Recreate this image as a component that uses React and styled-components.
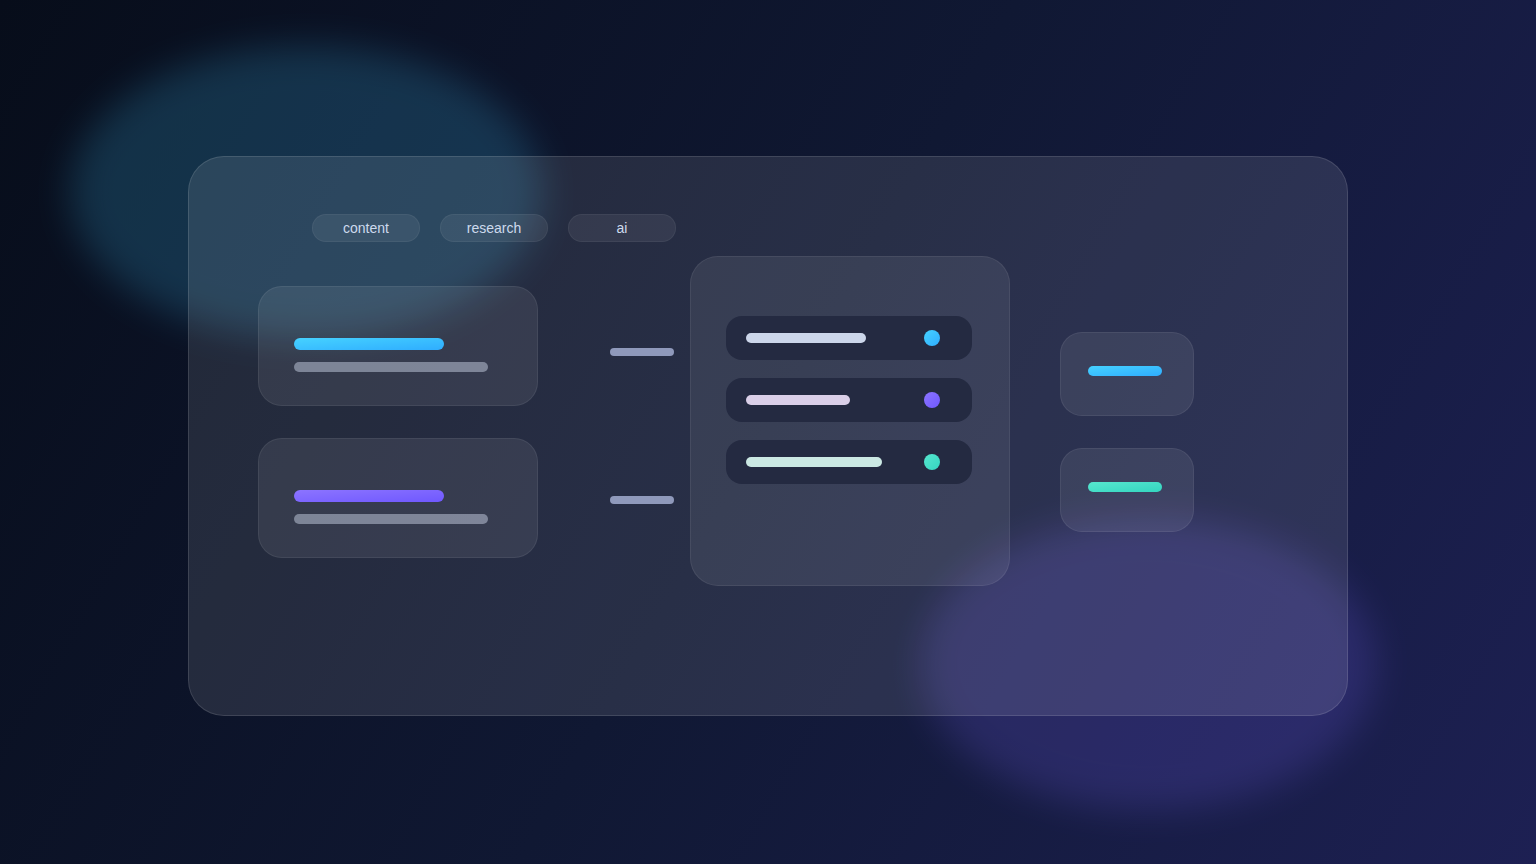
import React from "react";
import styled, { createGlobalStyle } from "styled-components";

const GlobalStyle = createGlobalStyle`
  *, *::before, *::after { box-sizing: border-box; }
  body {
    margin: 0;
    background: #0b1226;
    font-family: "Liberation Sans", Arial, sans-serif;
  }
`;

const fills = {
  sky: "linear-gradient(to bottom right, #46d2ff, #2fadff)",
  violet: "linear-gradient(to bottom right, #8c74ff, #6f58ff)",
  mint: "linear-gradient(to bottom right, #57e6cf, #34d6c0)",
  skyGlow: "#42caff",
  violetGlow: "#7e68ff",
  muted: "rgba(226, 235, 255, 0.42)",
  link: "#8f99bb",
  ice: "#ccd6ea",
  rose: "#dacfe8",
  foam: "#cbe8e3",
};

const Page = styled.main`
  position: relative;
  overflow: hidden;
  min-height: 100vh;
  padding: 156px 188px 148px;
  background: linear-gradient(120deg, #070d1a, #101833 50%, #1d2053);
`;

const Glow = styled.div`
  position: absolute;
  width: ${(p) => p.$width};
  height: 292px;
  border-radius: 50%;
  background: ${(p) => fills[p.$fill]};
  opacity: 0.18;
  filter: blur(18px);
  top: ${(p) => p.$top};
  left: ${(p) => p.$left};
`;

const Glass = styled.section`
  border: 1px solid rgba(255, 255, 255, 0.07);
  border-radius: ${(p) => p.$radius};
  background: rgba(255, 255, 255, 0.08);
`;

const Shell = styled(Glass)`
  position: relative;
  padding: 57px 153px 129px 69px;
  background: rgba(255, 255, 255, 0.1);
  border-color: rgba(255, 255, 255, 0.12);
`;

const Tags = styled.nav`
  display: flex;
  flex-wrap: wrap;
  gap: 20px;
  padding-left: 54px;
  margin-bottom: 14px;
`;

const Tag = styled.button`
  width: 108px;
  height: 28px;
  padding: 0;
  border: 1px solid rgba(255, 255, 255, 0.05);
  border-radius: 14px;
  background: rgba(255, 255, 255, 0.07);
  color: #cddaed;
  font: 14px/26px "Liberation Sans", Arial, sans-serif;
  text-align: center;
`;

const Flow = styled.div`
  display: grid;
  grid-template-columns:
    [input] minmax(0, 280fr) minmax(0, 72fr)
    [links] minmax(0, 64fr) minmax(0, 16fr)
    [queue] minmax(0, 320fr) minmax(0, 50fr)
    [output] minmax(0, 134fr);
  align-items: start;
`;

const Column = styled.div`
  grid-column-start: ${(p) => p.$area};
  display: flex;
  flex-direction: column;
  gap: ${(p) => p.$gap};
  padding-top: ${(p) => p.$top};
`;

const Bar = styled.div`
  width: ${(p) => p.$width};
  max-width: 100%;
  height: ${(p) => p.$height || "10px"};
  border-radius: 6px;
  background: ${(p) => fills[p.$fill]};
`;

const SourceCard = styled(Glass)`
  display: flex;
  flex-direction: column;
  gap: 12px;
  padding: 51px 35px 33px;
`;

const ResultCard = styled(Glass)`
  padding: 33px 27px 39px;
`;

const Queue = styled(Glass)`
  grid-column-start: queue;
  padding: 59px 37px 101px 35px;
`;

const QueueList = styled.ul`
  display: flex;
  flex-direction: column;
  gap: 18px;
  margin: 0;
  padding: 0;
  list-style: none;
`;

const QueueRow = styled.li`
  display: flex;
  align-items: center;
  justify-content: space-between;
  height: 44px;
  padding: 0 32px 0 20px;
  border-radius: 16px;
  background: #242a41;
`;

const Dot = styled.span`
  flex: none;
  width: 16px;
  height: 16px;
  border-radius: 50%;
  background: ${(p) => fills[p.$fill]};
`;

const tags = ["content", "research", "ai"];
const sources = ["sky", "violet"];
const results = ["sky", "mint"];
const queue = [
  { bar: "ice", width: "120px", dot: "sky" },
  { bar: "rose", width: "104px", dot: "violet" },
  { bar: "foam", width: "136px", dot: "mint" },
];

export default function App() {
  return (
    <>
      <GlobalStyle />
      <Page>
        <Glow $fill="skyGlow" $width="472px" $left="70px" $top="46px" />
        <Glow $fill="violetGlow" $width="456px" $left="920px" $top="518px" />
        <Shell $radius="36px">
          <Tags>
            {tags.map((tag) => (
              <Tag key={tag} type="button">{tag}</Tag>
            ))}
          </Tags>
          <Flow>
            <Column $area="input" $gap="32px" $top="30px">
              {sources.map((fill) => (
                <SourceCard key={fill} $radius="24px">
                  <Bar $fill={fill} $width="150px" $height="12px" />
                  <Bar $fill="muted" $width="194px" />
                </SourceCard>
              ))}
            </Column>
            <Column $area="links" $gap="140px" $top="92px">
              <Bar $fill="link" $width="100%" $height="8px" />
              <Bar $fill="link" $width="100%" $height="8px" />
            </Column>
            <Queue $radius="28px">
              <QueueList>
                {queue.map((row) => (
                  <QueueRow key={row.dot}>
                    <Bar $fill={row.bar} $width={row.width} />
                    <Dot $fill={row.dot} />
                  </QueueRow>
                ))}
              </QueueList>
            </Queue>
            <Column $area="output" $gap="32px" $top="76px">
              {results.map((fill) => (
                <ResultCard key={fill} $radius="22px">
                  <Bar $fill={fill} $width="74px" />
                </ResultCard>
              ))}
            </Column>
          </Flow>
        </Shell>
      </Page>
    </>
  );
}
